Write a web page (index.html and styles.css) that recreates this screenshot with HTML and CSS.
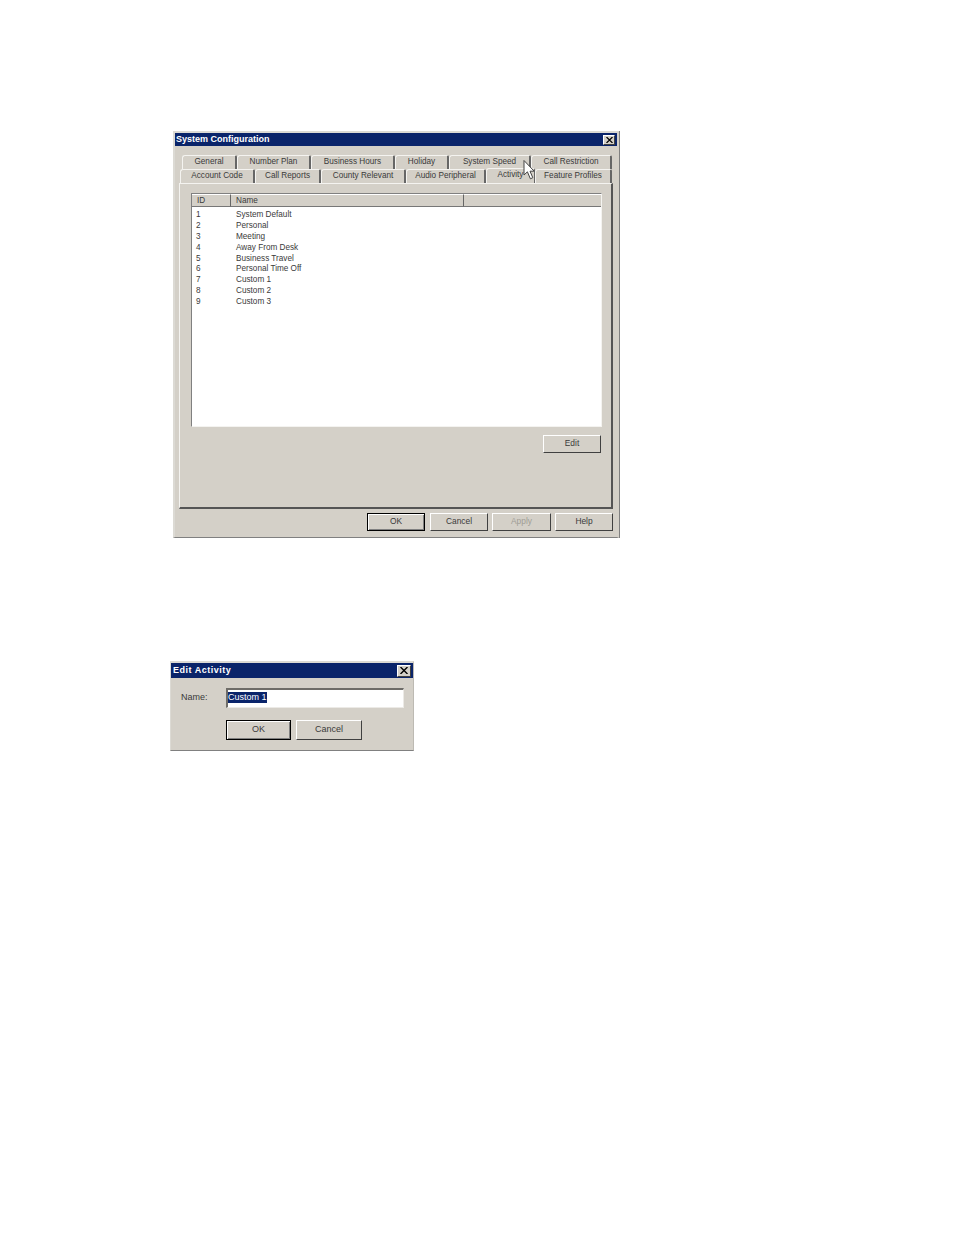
FILE: index.html
```html
<!DOCTYPE html>
<html lang="en">
<head>
<meta charset="utf-8">
<title>System Configuration</title>
<link rel="stylesheet" href="styles.css">
</head>
<body>
<section class="win win-config">
  <header class="titlebar">
    <span class="title">System Configuration</span>
    <span class="close"><svg viewBox="0 0 8 7" width="7" height="6"><path d="M0.5 0 L7.5 7 M7.5 0 L0.5 7" stroke="#000" stroke-width="1.4" fill="none"/></svg></span>
  </header>
  <div class="tabs tabs-back">
    <span class="tab">General</span>
    <span class="tab">Number Plan</span>
    <span class="tab">Business Hours</span>
    <span class="tab">Holiday</span>
    <span class="tab">System Speed</span>
    <span class="tab">Call Restriction</span>
  </div>
  <div class="tabs tabs-front">
    <span class="tab">Account Code</span>
    <span class="tab">Call Reports</span>
    <span class="tab">County Relevant</span>
    <span class="tab">Audio Peripheral</span>
    <span class="tab active">Activity</span>
    <span class="tab">Feature Profiles</span>
  </div>
  <div class="panel">
    <div class="list">
      <div class="list-head">
        <span class="head-cell">ID</span>
        <span class="head-cell">Name</span>
        <span class="head-cell"></span>
      </div>
      <div class="list-body">
        <div class="row"><span>1</span><span>System Default</span></div>
        <div class="row"><span>2</span><span>Personal</span></div>
        <div class="row"><span>3</span><span>Meeting</span></div>
        <div class="row"><span>4</span><span>Away From Desk</span></div>
        <div class="row"><span>5</span><span>Business Travel</span></div>
        <div class="row"><span>6</span><span>Personal Time Off</span></div>
        <div class="row"><span>7</span><span>Custom 1</span></div>
        <div class="row"><span>8</span><span>Custom 2</span></div>
        <div class="row"><span>9</span><span>Custom 3</span></div>
      </div>
    </div>
    <div class="edit-line"><button class="btn btn-edit">Edit</button></div>
  </div>
  <footer class="actions">
    <button class="btn btn-action default">OK</button>
    <button class="btn btn-action">Cancel</button>
    <button class="btn btn-action disabled">Apply</button>
    <button class="btn btn-action">Help</button>
  </footer>
  <svg class="cursor" viewBox="0 0 12 20" width="12" height="20"><path d="M1 0.5 L1 15 L4.4 11.8 L7.4 18.8 L9.8 17.7 L7 11.2 L11.2 11.2 Z" fill="#fff" stroke="#444" stroke-width="1"/></svg>
</section>

<section class="win win-edit">
  <header class="titlebar">
    <span class="title">Edit Activity</span>
    <span class="close"><svg viewBox="0 0 8 7" width="8" height="7"><path d="M0.5 0 L7.5 7 M7.5 0 L0.5 7" stroke="#000" stroke-width="1.4" fill="none"/></svg></span>
  </header>
  <div class="field">
    <label class="field-label">Name:</label>
    <div class="input"><span class="selected">Custom 1</span></div>
  </div>
  <div class="edit-actions">
    <button class="btn btn-wide default">OK</button>
    <button class="btn btn-wide">Cancel</button>
  </div>
</section>
</body>
</html>
```
FILE: styles.css
```css
* { box-sizing: border-box; }
html, body { margin: 0; padding: 0; background: #fff; }
body {
  position: relative;
  width: 954px;
  height: 1235px;
  overflow: hidden;
  font-family: "Liberation Sans", Arial, sans-serif;
  font-size: 8.2px;
  color: #3a3a3a;
}
.win {
  position: absolute;
  background: #d4d0c8;
  border-top: 2px solid #dcdad4;
  border-left: 2px solid #dcdad4;
  border-right: 2px solid #d4d0c8;
  border-bottom: 1px solid #808080;
}
.win-config { left: 173px; top: 131px; width: 446px; height: 407px; box-shadow: 1px 0 0 #808080; }
.win-edit { left: 170px; top: 661px; width: 244px; height: 90px; border-left-width: 1px; border-right-width: 1px; border-right-color: #bdbab3; }

.titlebar {
  display: flex;
  align-items: center;
  justify-content: space-between;
  height: 13px;
  background: #0a246a;
  color: #fff;
  padding: 0 2px 0 1px;
}
.win-edit .titlebar { height: 15px; padding: 0 2px 0 2px; }
.title { font-weight: 700; font-size: 9px; line-height: 13px; }
.win-edit .title { letter-spacing: 0.5px; }
.close {
  display: flex;
  align-items: center;
  justify-content: center;
  width: 12px;
  height: 10px;
  background: #d4d0c8;
  border: 1px solid;
  border-color: #fff #404040 #404040 #fff;
}
.win-edit .close { width: 14px; height: 12px; }

.tabs { display: grid; height: 14px; }
.tabs-back {
  margin: 9px 0 0 7px;
  grid-template-columns: 55px 74px 84px 54px 82px 81px;
}
.tabs-front {
  margin: 0 0 0 5px;
  grid-template-columns: 75px 66px 85px 80px 49px 77px;
}
.tab {
  display: flex;
  align-items: center;
  justify-content: center;
  padding-bottom: 2px;
  white-space: nowrap;
  background: #d4d0c8;
  border-top: 1px solid #f4f3f0;
  border-left: 1px solid #f4f3f0;
  border-right: 2px solid #666;
  border-top-left-radius: 3px;
  border-top-right-radius: 2px;
}
.tab.active {
  position: relative;
  z-index: 2;
  height: 15px;
  margin-top: -1px;
  padding-bottom: 3px;
  border-right-width: 1px;
}
.panel {
  position: relative;
  height: 326px;
  margin: 0 4px 0 4px;
  padding: 9px 9px 0 11px;
  border: 1px solid;
  border-color: #f4f3f0 #555 #555 #f4f3f0;
  border-right-width: 2px;
  border-bottom-width: 2px;
}
.list {
  height: 234px;
  background: #fff;
  border: 1px solid;
  border-color: #808080 #f4f3f0 #f4f3f0 #808080;
}
.list-head {
  display: grid;
  grid-template-columns: 39px 233px 1fr;
  height: 13px;
  background: #d4d0c8;
}
.head-cell {
  padding-left: 5px;
  line-height: 11px;
  border-top: 1px solid #fff;
  border-bottom: 1px solid #777;
  border-right: 1px solid #666;
}
.head-cell:last-child { border-right: 0; }
.list-body { padding-top: 2px; }
.row {
  display: grid;
  grid-template-columns: 40px 1fr;
  height: 10.9px;
  line-height: 11px;
  padding-left: 4px;
}
.edit-line { display: flex; justify-content: flex-end; padding: 8px 1px 0 0; }

.btn {
  display: block;
  padding: 0 0 1px;
  margin: 0;
  font-family: inherit;
  font-size: 8.4px;
  color: #3a3a3a;
  background: #d4d0c8;
  border: 1px solid;
  border-color: #fff #404040 #404040 #fff;
}
.btn-edit { width: 58px; height: 18px; padding-bottom: 2px; }
.actions {
  display: flex;
  justify-content: flex-end;
  gap: 4px;
  padding: 4px 4px 0 0;
}
.btn-action { width: 58px; height: 18px; padding-bottom: 2px; }
.btn-action.default { margin-right: 1px; }
.btn-action.disabled { width: 59px; }
.btn.default { border: 1px solid #000; box-shadow: inset 1px 1px 0 #fff, inset -1px -1px 0 #808080; }
.btn.disabled { color: #a09d96; }

.cursor { position: absolute; left: 348px; top: 27px; z-index: 3; }

.field { display: flex; align-items: center; padding: 10px 9px 0 10px; }
.field-label { width: 45px; padding-bottom: 3px; font-size: 9px; }
.input {
  width: 178px;
  height: 20px;
  padding: 2px 0 0 0;
  background: #fff;
  border: 1px solid;
  border-width: 2px 1px 1px 2px;
  border-color: #6e6c68 #eceae6 #eceae6 #6e6c68;
}
.selected {
  display: inline-block;
  height: 11px;
  line-height: 11px;
  font-size: 9px;
  background: #0a246a;
  color: #fff;
}
.edit-actions { display: flex; gap: 5px; padding: 12px 0 0 55px; }
.btn-wide { width: 65px; height: 20px; font-size: 9px; padding-bottom: 2px; }
.btn-wide + .btn-wide { width: 66px; }
```
